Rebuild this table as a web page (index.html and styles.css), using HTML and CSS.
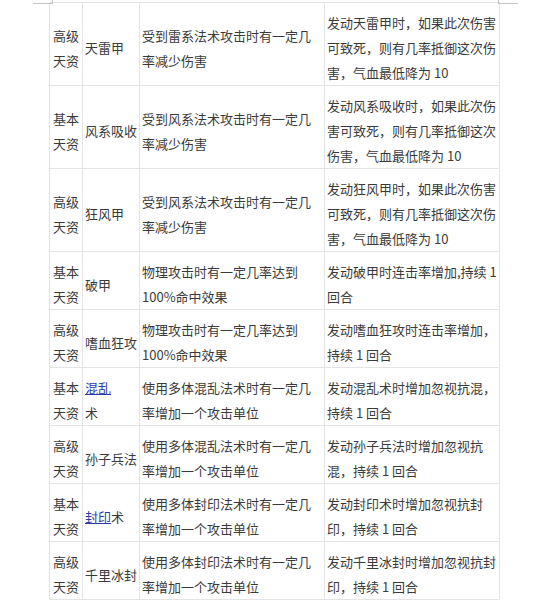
FILE: index.html
```html
<!DOCTYPE html>
<html lang="zh-CN">
<head>
<meta charset="utf-8">
<title>天资</title>
<link rel="stylesheet" href="styles.css">
</head>
<body>
<div class="topbar"><div class="tick tick-left"></div><div class="tick tick-right"></div></div>
<table class="skills">
  <colgroup>
    <col class="c-type"><col class="c-name"><col class="c-desc"><col class="c-effect">
  </colgroup>
  <tbody>
    <tr><td class="type">高级天资</td><td>天雷甲</td><td>受到雷系法术攻击时有一定几率减少伤害</td><td>发动天雷甲时，如果此次伤害可致死，则有几率抵御这次伤害，气血最低降为 10</td></tr>
    <tr><td class="type">基本天资</td><td>风系吸收</td><td>受到风系法术攻击时有一定几率减少伤害</td><td>发动风系吸收时，如果此次伤害可致死，则有几率抵御这次伤害，气血最低降为 10</td></tr>
    <tr><td class="type">高级天资</td><td>狂风甲</td><td>受到风系法术攻击时有一定几率减少伤害</td><td>发动狂风甲时，如果此次伤害可致死，则有几率抵御这次伤害，气血最低降为 10</td></tr>
    <tr><td class="type">基本天资</td><td>破甲</td><td>物理攻击时有一定几率达到100%命中效果</td><td>发动破甲时连击率增加,持续 1 回合</td></tr>
    <tr><td class="type">高级天资</td><td>嗜血狂攻</td><td>物理攻击时有一定几率达到100%命中效果</td><td>发动嗜血狂攻时连击率增加，持续 1 回合</td></tr>
    <tr><td class="type">基本天资</td><td><a href="#">混乱</a><br>术</td><td>使用多体混乱法术时有一定几率增加一个攻击单位</td><td>发动混乱术时增加忽视抗混，持续 1 回合</td></tr>
    <tr><td class="type">高级天资</td><td>孙子兵法</td><td>使用多体混乱法术时有一定几率增加一个攻击单位</td><td>发动孙子兵法时增加忽视抗混，持续 1 回合</td></tr>
    <tr><td class="type">基本天资</td><td><a href="#">封印</a>术</td><td>使用多体封印法术时有一定几率增加一个攻击单位</td><td>发动封印术时增加忽视抗封印，持续 1 回合</td></tr>
    <tr><td class="type">高级天资</td><td>千里冰封</td><td>使用多体封印法术时有一定几率增加一个攻击单位</td><td>发动千里冰封时增加忽视抗封印，持续 1 回合</td></tr>
  </tbody>
</table>
</body>
</html>
```

FILE: styles.css
```css
html, body {
  margin: 0;
  padding: 0;
  background: #ffffff;
}

body {
  font-family: "Noto Sans CJK SC", "Noto Sans", sans-serif;
  font-size: 13px;
  color: #3a3a3a;
}

.topbar {
  display: flex;
  justify-content: space-between;
  height: 3px;
  margin: 0 29px 0 33px;
}

.tick {
  width: 19px;
  height: 3px;
  border-bottom: 1px solid #c4c4c4;
}

.tick-left {
  border-right: 1px solid #c4c4c4;
}

.tick-right {
  border-left: 1px solid #c4c4c4;
}

.skills {
  margin: -1px 0 0 49px;
  border-collapse: collapse;
  table-layout: fixed;
  width: 450px;
}

.c-type { width: 33px; }
.c-name { width: 57px; }
.c-desc { width: 185px; }
.c-effect { width: 175px; }

.skills td {
  border: 1px solid #e4e4e4;
  padding: 7px 1px 0 2px;
  line-height: 25px;
  vertical-align: middle;
  text-align: left;
}

.skills td.type {
  padding-left: 3px;
}

.skills a {
  color: #2b3aa6;
  text-decoration: underline;
}
```
